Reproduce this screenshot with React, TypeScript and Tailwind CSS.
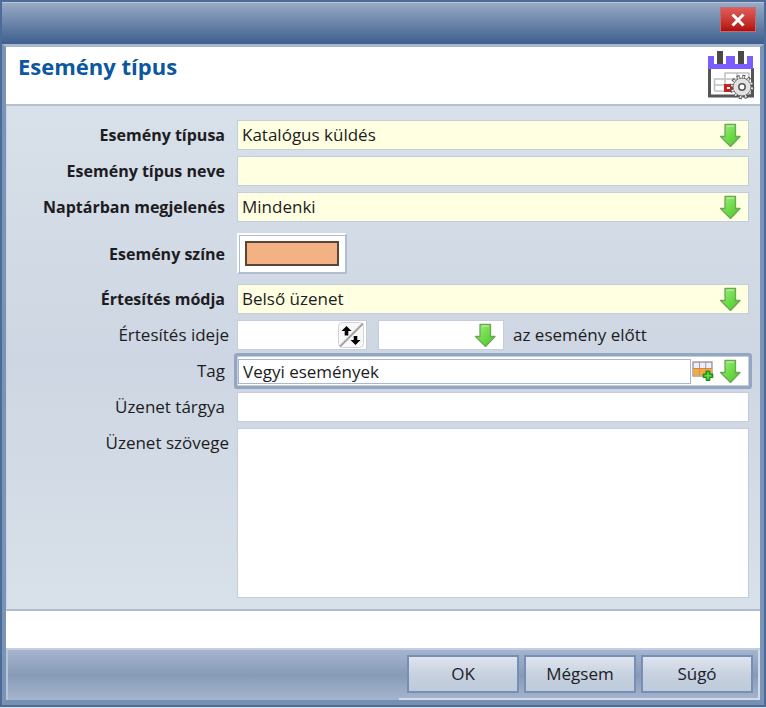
import React, { useState } from 'react';
import { clsx } from 'clsx';

interface RowProps {
  id: string;
  label: string;
  bold?: boolean;
  wide?: boolean;
  top?: boolean;
  children: React.ReactNode;
}

interface DropDownProps {
  id: string;
  value: string;
  options: string[];
  onChange: (value: string) => void;
  className?: string;
  label?: string;
}

const EVENT_TYPES = ['Katalógus küldés'];
const VISIBILITY = ['Mindenki'];
const NOTIFY_MODES = ['Belső üzenet'];

// Green "open list" arrow
const ArrowIcon = () => (
  <svg width="22" height="24" viewBox="0 0 22 24" aria-hidden="true">
    <defs>
      <linearGradient id="arrowFill" x1="0" y1="0" x2="1" y2="1">
        <stop offset="0" stopColor="#a4ee80" />
        <stop offset="0.5" stopColor="#6fdc48" />
        <stop offset="1" stopColor="#4cc22c" />
      </linearGradient>
    </defs>
    <path d="M6 1.5h10.500v12h4.500L11.500 23.500 1.500 13.500H6z" fill="url(#arrowFill)" stroke="#6ba656" strokeWidth="1.300" strokeLinejoin="round" />
    <path d="M7.500 3h7.500" stroke="#c9f5b4" strokeWidth="1" />
  </svg>
);

const UpDownIcon = () => (
  <svg width="26" height="26" viewBox="0 0 26 26" aria-hidden="true">
    <rect x="0.5" y="0.5" width="25" height="25" rx="4" fill="#f8f8f8" stroke="#d4d4d4" />
    <path d="M2 24.500L25 1.500" stroke="#a2a2a2" strokeWidth="2" />
    <path d="M8.500 4l5 5h-3.200v4.500H6.700V9H3.500z" fill="#000" />
    <path d="M17.500 23l-5-5h3.200v-4h3.600v4h3.200z" fill="#000" />
  </svg>
);

const TableAddIcon = () => (
  <svg width="22" height="20" viewBox="0 0 22 20" aria-hidden="true">
    <rect x="1" y="1" width="19" height="14" fill="#ececfa" stroke="#9a8f8f" strokeWidth="1.300" />
    <rect x="1.600" y="7.500" width="17.800" height="7" fill="#f7a83c" />
    <path d="M7.500 1v14M13.700 1v14" stroke="#a49a9e" strokeWidth="1" />
    <path d="M1 7.500h19" stroke="#d48a32" strokeWidth="1" />
    <path d="M14.200 10h3.600v3h3v3.600h-3v3h-3.600v-3h-3V13h3z" fill="#35b81f" stroke="#11820f" strokeWidth="1" />
    <path d="M16 11.500v6.500M12.800 14.800h6.400" stroke="#7be55c" strokeWidth="1" />
  </svg>
);

const CalendarGearIcon = () => (
  <svg width="48" height="50" viewBox="0 0 48 50" aria-hidden="true">
    <path d="M2.500 18v28h43V18" fill="#fff" stroke="#555" strokeWidth="3" />
    <path d="M1 6h6v8h12V6h9v8h12V6h6v13H1z" fill="#7a5cff" />
    <rect x="10" y="1" width="6" height="13" fill="#4a4a4a" />
    <rect x="31" y="1" width="6" height="13" fill="#4a4a4a" />
    <path d="M18 28v-5h24v6M7.500 41V29H42M7.500 41H18M18 29v12M30 23v6M7.500 35H26" fill="none" stroke="#c0c0c0" strokeWidth="1.500" />
    <rect x="18.500" y="35.500" width="6" height="5" fill="#fff" stroke="#cc1f1f" strokeWidth="3" />
    <circle cx="35" cy="37" r="10.500" fill="none" stroke="#555" strokeWidth="3.500" strokeDasharray="2.900 2.598" />
    <circle cx="35" cy="37" r="9" fill="#e2e2e2" stroke="#666" strokeWidth="1" />
    <circle cx="35" cy="37" r="10" fill="none" stroke="#e2e2e2" strokeWidth="2.200" strokeDasharray="1.700 3.536" strokeDashoffset="-0.500" />
    <circle cx="35" cy="37" r="3.200" fill="#fff" stroke="#555" strokeWidth="1.500" />
  </svg>
);

const FormRow: React.FC<RowProps> = ({ id, label, bold, wide, top, children }) => (
  <div className="grid grid-cols-[230px_1fr]">
    <label
      htmlFor={id}
      className={clsx('text-right', top ? 'pt-1' : 'self-center', bold && 'text-base font-bold', wide ? 'pr-2' : 'pr-3')}
    >
      {label}
    </label>
    {children}
  </div>
);

const DropDown: React.FC<DropDownProps> = ({ id, value, options, onChange, className, label }) => (
  <div className={clsx('relative h-[30px] border border-[#c3cddb]', className)}>
    <select
      id={id}
      aria-label={label}
      value={value}
      onChange={e => onChange(e.target.value)}
      className="block h-full w-full appearance-none bg-transparent pl-1 pr-8 outline-none"
    >
      {options.map(o => (
        <option key={o}>{o}</option>
      ))}
    </select>
    <span className="pointer-events-none absolute right-[7px] top-[2px]">
      <ArrowIcon />
    </span>
  </div>
);

const App: React.FC = () => {
  const [eventType, setEventType] = useState(EVENT_TYPES[0]);
  const [name, setName] = useState('');
  const [visibility, setVisibility] = useState(VISIBILITY[0]);
  const [notifyMode, setNotifyMode] = useState(NOTIFY_MODES[0]);
  const [amount, setAmount] = useState('');
  const [unit, setUnit] = useState('');
  const [tag, setTag] = useState('Vegyi események');
  const [subject, setSubject] = useState('');
  const [body, setBody] = useState('');

  const buttonClass =
    'h-[38px] w-[112px] border-2 border-[#7590b4] bg-linear-to-b from-[#dfe5ef] via-[#c8d2e0] to-[#bccada] text-[#202028]';

  return (
    <div className="border-b-2 border-[#dce3ec] font-['Open_Sans','Noto_Sans',sans-serif] text-[17px] leading-[22px] text-[#1c1c22]">
      <div className="border-2 border-[#4b6b98]">
        {/* Title bar */}
        <div className="flex h-[42px] items-start justify-end border-t border-[#b9c6d8] bg-linear-to-b from-[#98aac5] to-[#3f5f8e] pr-2 pt-1">
          <button
            type="button"
            aria-label="Bezárás"
            className="flex h-[25px] w-9 items-center justify-center border border-[#c06a78] bg-linear-to-b from-[#df5c58] to-[#b30808]"
          >
            <svg width="14" height="14" viewBox="0 0 14 14" aria-hidden="true">
              <path d="M1.500 1.500l11 11M12.500 1.500l-11 11" stroke="#fff" strokeWidth="3" />
            </svg>
          </button>
        </div>

        <div className="border-x-4 border-b-[5px] border-t-[3px] border-x-[#7b94b6] border-b-[#7590b3] border-t-[#a9b8cf]">
          <header className="flex h-[59px] justify-between border-b-2 border-[#b4c1d1] bg-white pl-3 pr-[5px] pt-[3px]">
            <h1 className="text-[22px] font-bold leading-8 text-[#0b57a0]">Esemény típus</h1>
            <CalendarGearIcon />
          </header>

          <main className="border-b-2 border-l border-b-[#adbccb] border-l-[#c9d5e2] bg-linear-to-b from-[#d8e0e9] via-[#ced6e3] to-[#d8e0e9] pb-[11px] pr-[11px] pt-[14px]">
            <div className="flex flex-col gap-1.5">
              <FormRow id="event-type" label="Esemény típusa" bold>
                <DropDown id="event-type" value={eventType} options={EVENT_TYPES} onChange={setEventType} className="bg-[#ffffe1]" />
              </FormRow>
              <FormRow id="event-name" label="Esemény típus neve" bold>
                <input
                  id="event-name"
                  type="text"
                  value={name}
                  onChange={e => setName(e.target.value)}
                  className="h-[30px] w-full border border-[#c3cddb] bg-[#ffffe1] px-1 outline-none"
                />
              </FormRow>
              <FormRow id="visibility" label="Naptárban megjelenés" bold>
                <DropDown id="visibility" value={visibility} options={VISIBILITY} onChange={setVisibility} className="bg-[#ffffe1]" />
              </FormRow>
            </div>

            <div className="pb-[10px] pt-[11px]">
              <FormRow id="event-color" label="Esemény színe" bold>
                <button
                  id="event-color"
                  type="button"
                  className="h-[41px] w-[110px] border-2 border-b-[#b0bed2] border-l-white border-r-[#b0bed2] border-t-white bg-white p-[6px] shadow-[inset_1px_1px_0_#b0bed2]"
                >
                  <span className="block h-full w-full border-2 border-[#5a4636] bg-[#f4b183]" />
                </button>
              </FormRow>
            </div>

            <div className="flex flex-col gap-1.5">
              <FormRow id="notify-mode" label="Értesítés módja" bold>
                <DropDown id="notify-mode" value={notifyMode} options={NOTIFY_MODES} onChange={setNotifyMode} className="bg-[#ffffe1]" />
              </FormRow>

              <FormRow id="notify-amount" label="Értesítés ideje" wide>
                <div className="flex items-center">
                  <div className="flex h-[30px] w-[130px] items-center border border-[#c3cddb] bg-white pr-[2px]">
                    <input
                      id="notify-amount"
                      type="text"
                      value={amount}
                      onChange={e => setAmount(e.target.value)}
                      className="min-w-0 flex-1 px-1 outline-none"
                    />
                    <button type="button" aria-label="Léptetés">
                      <UpDownIcon />
                    </button>
                  </div>
                  <DropDown
                    id="notify-unit"
                    label="Időegység"
                    value={unit}
                    options={['', 'perc', 'óra', 'nap']}
                    onChange={setUnit}
                    className="ml-[11px] w-[126px] bg-white"
                  />
                  <span className="ml-[9px]">az esemény előtt</span>
                </div>
              </FormRow>

              <FormRow id="tag" label="Tag">
                <div className="flex h-[30px] items-center rounded-[1px] border border-[#c3cddb] bg-white pr-[7px] ring-3 ring-[#93a7c3]">
                  <input
                    id="tag"
                    type="text"
                    value={tag}
                    onChange={e => setTag(e.target.value)}
                    className="h-[25px] min-w-0 flex-1 border border-[#a9b8cf] px-1 outline-none"
                  />
                  <button type="button" aria-label="Új tag" className="ml-px">
                    <TableAddIcon />
                  </button>
                  <button type="button" aria-label="Lista megnyitása" className="ml-[5px]">
                    <ArrowIcon />
                  </button>
                </div>
              </FormRow>

              <FormRow id="subject" label="Üzenet tárgya">
                <input
                  id="subject"
                  type="text"
                  value={subject}
                  onChange={e => setSubject(e.target.value)}
                  className="h-[30px] w-full border border-[#c3cddb] bg-white px-1 outline-none"
                />
              </FormRow>
              <FormRow id="body" label="Üzenet szövege" wide top>
                <textarea
                  id="body"
                  value={body}
                  onChange={e => setBody(e.target.value)}
                  className="block h-[170px] w-full resize-none border border-[#c3cddb] bg-white px-1 outline-none"
                />
              </FormRow>
            </div>
          </main>

          {/* Status strip */}
          <div className="h-[37px] bg-white" />

          <footer className="flex h-[52px] justify-end border-l-2 border-t-2 border-l-[#b9c6d8] border-t-[#c3cee0] bg-linear-to-b from-[#a6b4ce] via-[#879bb7] to-[#a6b4ce]">
            <div className="flex items-center gap-[5px] border-b-2 border-r-2 border-[#d3dbe8] pl-2 pr-[5px]">
              <button type="button" className={buttonClass}>OK</button>
              <button type="button" className={buttonClass}>Mégsem</button>
              <button type="button" className={buttonClass}>Súgó</button>
            </div>
          </footer>
        </div>
      </div>
    </div>
  );
};

export default App;
